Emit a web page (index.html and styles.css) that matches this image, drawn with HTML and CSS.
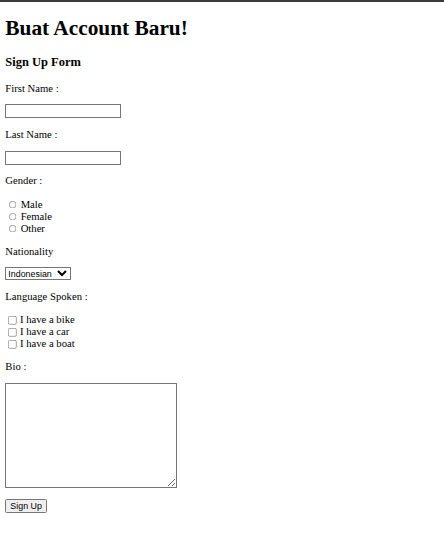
FILE: index.html
```html
<!DOCTYPE html>
<html>
<head>
<meta charset="utf-8">
<title>Sign Up</title>
<link rel="stylesheet" href="styles.css">
</head>
<body>
<div class="page">
<h1 class="title">Buat Account Baru!</h1>
<h3 class="subtitle">Sign Up Form</h3>
<form class="form">
<p class="label">First Name :</p>
<input type="text" class="field">
<p class="label">Last Name :</p>
<input type="text" class="field">
<p class="label">Gender :</p>
<div class="options">
<input type="radio" class="radio" name="gender" id="male"><label for="male">Male</label><br>
<input type="radio" class="radio" name="gender" id="female"><label for="female">Female</label><br>
<input type="radio" class="radio" name="gender" id="other"><label for="other">Other</label>
</div>
<p class="label">Nationality</p>
<select class="select"><option>Indonesian</option><option>Other</option></select>
<p class="label">Language Spoken :</p>
<div class="options">
<input type="checkbox" class="check" id="bike"><label for="bike">I have a bike</label><br>
<input type="checkbox" class="check" id="car"><label for="car">I have a car</label><br>
<input type="checkbox" class="check" id="boat"><label for="boat">I have a boat</label>
</div>
<p class="label">Bio :</p>
<textarea class="bio" cols="30" rows="10"></textarea>
<br><br>
<button type="submit" class="submit">Sign Up</button>
</form>
</div>
</body>
</html>
```
FILE: styles.css
```css
html {
  border-top: 2px solid #3a3a3a;
  background: #fff;
}
body {
  margin: 0;
  font-family: "Liberation Serif", "Times New Roman", serif;
}
.page {
  zoom: 0.6667;
  padding: 0 8px 8px;
}
.title {
  margin: 21px 0;
}
.subtitle {
  margin: 19px 0;
}
.field {
  box-sizing: border-box;
  width: 173px;
  height: 21px;
}
.options {
  padding-top: 3px;
  line-height: 18px;
}
.radio {
  width: 13px;
  height: 13px;
  margin: 0 5px 0 5px;
  vertical-align: -2px;
}
.check {
  width: 13px;
  height: 13px;
  margin: 0 5px 0 4px;
  vertical-align: -2px;
}
.select {
  box-sizing: border-box;
  width: 98px;
  height: 19px;
  font-family: "Liberation Sans", Arial, sans-serif;
  font-size: 13.33px;
}
.bio {
  box-sizing: border-box;
  width: 258px;
  height: 158px;
  vertical-align: bottom;
}
.submit {
  font-family: "Liberation Sans", Arial, sans-serif;
  font-size: 13.33px;
  padding: 1px 6px;
  height: 21px;
}
```
